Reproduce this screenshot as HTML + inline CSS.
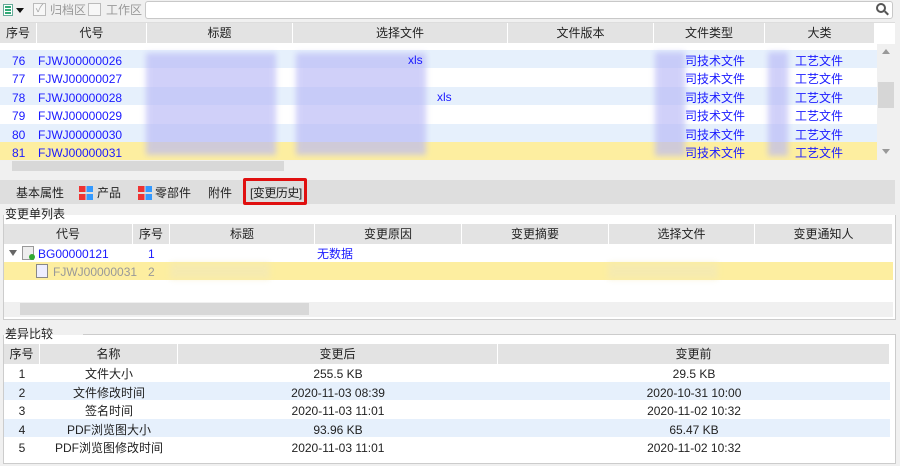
<!DOCTYPE html>
<html><head><meta charset="utf-8"><style>
*{margin:0;padding:0;box-sizing:border-box}
body{width:900px;height:466px;background:#f0f0f0;font-family:"Liberation Sans","Noto Sans CJK SC",sans-serif;font-size:12px;line-height:14px;color:#222;position:relative;overflow:hidden}
.a{position:absolute}
.c{position:absolute;text-align:center;white-space:nowrap;overflow:hidden}
.hd{position:absolute;background:#e3e3e3;border-right:1px solid #fff;text-align:center;line-height:20px;color:#222}
.blue{color:#1a1aff}
.blur{position:absolute;background:#b8b8f6;filter:blur(3px);opacity:.65}
.row{position:absolute;left:0}
</style></head><body>
<!-- toolbar -->
<div class="a" style="left:3px;top:4px;width:10px;height:12px;border:1px solid #6a9;background:#fff"></div>
<div class="a" style="left:5px;top:6px;width:6px;height:2px;background:#3a7;box-shadow:0 3px 0 #3a7,0 6px 0 #3a7"></div>
<div class="a" style="left:16px;top:8px;border-left:4px solid transparent;border-right:4px solid transparent;border-top:5px solid #111"></div>
<div class="a" style="left:33px;top:3px;width:13px;height:13px;border:1px solid #bbb;background:#f7f7f7;color:#aaa;font-size:11px;line-height:11px;text-align:center">✓</div>
<div class="a" style="left:50px;top:3px;color:#999;font-size:12px">归档区</div>
<div class="a" style="left:88px;top:3px;width:13px;height:13px;border:1px solid #bbb;background:#f7f7f7"></div>
<div class="a" style="left:106px;top:3px;color:#999;font-size:12px">工作区</div>
<div class="a" style="left:145px;top:1px;width:748px;height:18px;background:#fff;border:1px solid #c8c8c8;border-radius:3px"></div>
<div class="a" style="left:876px;top:3px;width:10px;height:10px;border:2px solid #555;border-radius:50%"></div>
<div class="a" style="left:884px;top:12px;width:5px;height:2px;background:#555;transform:rotate(45deg)"></div>

<!-- top grid -->
<div class="a" style="left:0;top:22px;width:895px;height:150px;background:#fff;border-top:1px solid #ddd"></div>
<div class="hd" style="left:0;top:23px;width:37px">序号</div>
<div class="hd" style="left:37px;top:23px;width:110px">代号</div>
<div class="hd" style="left:147px;top:23px;width:146px">标题</div>
<div class="hd" style="left:293px;top:23px;width:215px">选择文件</div>
<div class="hd" style="left:508px;top:23px;width:146px">文件版本</div>
<div class="hd" style="left:654px;top:23px;width:111px">文件类型</div>
<div class="hd" style="left:765px;top:23px;width:110px">大类</div>
<div class="hd" style="left:875px;top:23px;width:20px"></div>
<div class="row" style="top:50px;width:877px;height:18px;background:#e6f0fc"></div>
<div class="row" style="top:87px;width:877px;height:18px;background:#e6f0fc"></div>
<div class="row" style="top:124px;width:877px;height:18px;background:#e6f0fc"></div>
<div class="row" style="top:142px;width:877px;height:18px;background:#fdeea0"></div>
<div class="a blue" style="left:12px;top:52px;line-height:18.4px">76<br>77<br>78<br>79<br>80<br>81</div>
<div class="a blue" style="left:38px;top:52px;line-height:18.4px">FJWJ00000026<br>FJWJ00000027<br>FJWJ00000028<br>FJWJ00000029<br>FJWJ00000030<br>FJWJ00000031</div>
<div class="blur" style="left:146px;top:53px;width:130px;height:102px"></div>
<div class="blur" style="left:296px;top:53px;width:130px;height:102px"></div>
<div class="a blue" style="left:408px;top:53px">xls</div>
<div class="a blue" style="left:437px;top:90px">xls</div>
<div class="blur" style="left:655px;top:52px;width:30px;height:104px"></div>
<div class="blur" style="left:768px;top:52px;width:20px;height:104px"></div>
<div class="a blue" style="left:685px;top:52px;line-height:18.4px">司技术文件<br>司技术文件<br>司技术文件<br>司技术文件<br>司技术文件<br>司技术文件</div>
<div class="a blue" style="left:795px;top:52px;line-height:18.4px">工艺文件<br>工艺文件<br>工艺文件<br>工艺文件<br>工艺文件<br>工艺文件</div>
<div class="a blue" style="left:876px;top:52px;line-height:18.4px;font-size:10px">✕<br>✕<br>✕<br>✕<br>✕<br>✕</div>
<div class="a" style="left:877px;top:44px;width:18px;height:116px;background:#f0f0f0"></div>
<div class="a" style="left:878px;top:82px;width:16px;height:26px;background:#d6d6d6"></div>
<div class="a" style="left:882px;top:49px;border-left:4px solid transparent;border-right:4px solid transparent;border-bottom:5px solid #999"></div>
<div class="a" style="left:882px;top:149px;border-left:4px solid transparent;border-right:4px solid transparent;border-top:5px solid #999"></div>
<div class="a" style="left:0;top:160px;width:895px;height:12px;background:#f0f0f0"></div>
<div class="a" style="left:12px;top:161px;width:272px;height:10px;background:#d8d8d8"></div>

<!-- tabs -->
<div class="a" style="left:0;top:180px;width:895px;height:24px;background:#dedede"></div>
<div class="a" style="left:16px;top:186px">基本属性</div>
<div class="a" style="left:79px;top:186px;width:14px;height:14px;background:linear-gradient(90deg,#e33 0 45%,transparent 45% 55%,#39f 55%)"></div>
<div class="a" style="left:79px;top:192px;width:14px;height:2px;background:#dedede"></div>
<div class="a" style="left:97px;top:186px">产品</div>
<div class="a" style="left:138px;top:186px;width:14px;height:14px;background:linear-gradient(90deg,#e33 0 45%,transparent 45% 55%,#39f 55%)"></div>
<div class="a" style="left:138px;top:192px;width:14px;height:2px;background:#dedede"></div>
<div class="a" style="left:155px;top:186px">零部件</div>
<div class="a" style="left:208px;top:186px">附件</div>
<div class="a" style="left:243px;top:178px;width:64px;height:27px;border:3px solid #e01010;border-radius:2px"></div>
<div class="a" style="left:250px;top:186px;letter-spacing:-0.5px">[变更历史]</div>

<!-- change list -->
<div class="a" style="left:3px;top:214px;width:893px;height:106px;border:1px solid #ccc;background:#fff"></div>
<div class="a" style="left:3px;top:205px;background:#f0f0f0;width:895px;height:10px"></div>
<div class="a" style="left:5px;top:207px">变更单列表</div>
<div class="hd" style="left:4px;top:224px;width:129px">代号</div>
<div class="hd" style="left:133px;top:224px;width:37px">序号</div>
<div class="hd" style="left:170px;top:224px;width:145px">标题</div>
<div class="hd" style="left:315px;top:224px;width:147px">变更原因</div>
<div class="hd" style="left:462px;top:224px;width:147px">变更摘要</div>
<div class="hd" style="left:609px;top:224px;width:146px">选择文件</div>
<div class="hd" style="left:755px;top:224px;width:138px">变更通知人</div>
<div class="a" style="left:9px;top:250px;border-left:4px solid transparent;border-right:4px solid transparent;border-top:6px solid #666"></div>
<div class="a" style="left:22px;top:246px;width:12px;height:14px;border:1px solid #999;background:#eee"></div>
<div class="a" style="left:29px;top:254px;width:6px;height:6px;background:#3a3;border-radius:50%"></div>
<div class="a blue" style="left:38px;top:247px">BG00000121</div>
<div class="a blue" style="left:148px;top:247px">1</div>
<div class="a blue" style="left:317px;top:247px">无数据</div>
<div class="a" style="left:4px;top:262px;width:889px;height:18px;background:#fdeea0"></div>
<div class="a" style="left:36px;top:264px;width:12px;height:14px;border:1px solid #888;background:#eef"></div>
<div class="a" style="left:53px;top:265px;color:#999">FJWJ00000031</div>
<div class="a" style="left:148px;top:265px;color:#999">2</div>
<div class="blur" style="left:170px;top:263px;width:100px;height:16px;background:#f2e9b8"></div>
<div class="blur" style="left:608px;top:263px;width:110px;height:16px;background:#f2e9b8"></div>
<div class="a" style="left:4px;top:302px;width:889px;height:15px;background:#f0f0f0"></div>
<div class="a" style="left:20px;top:303px;width:289px;height:12px;background:#d8d8d8"></div>

<!-- diff -->
<div class="a" style="left:3px;top:334px;width:893px;height:130px;border:1px solid #ccc;background:#fff"></div>
<div class="a" style="left:3px;top:325px;background:#f0f0f0;width:80px;height:10px"></div>
<div class="a" style="left:5px;top:327px">差异比较</div>
<div class="hd" style="left:4px;top:344px;width:36px">序号</div>
<div class="hd" style="left:40px;top:344px;width:138px">名称</div>
<div class="hd" style="left:178px;top:344px;width:320px">变更后</div>
<div class="hd" style="left:498px;top:344px;width:392px">变更前</div>
<div class="a" style="left:4px;top:382px;width:886px;height:18px;background:#e6f0fc"></div>
<div class="a" style="left:4px;top:419px;width:886px;height:18px;background:#e6f0fc"></div>
<div class="c" style="left:4px;top:365px;width:36px;line-height:18.5px">1<br>2<br>3<br>4<br>5</div>
<div class="c" style="left:40px;top:365px;width:138px;line-height:18.5px">文件大小<br>文件修改时间<br>签名时间<br>PDF浏览图大小<br>PDF浏览图修改时间</div>
<div class="c" style="left:178px;top:365px;width:320px;line-height:18.5px">255.5 KB<br>2020-11-03 08:39<br>2020-11-03 11:01<br>93.96 KB<br>2020-11-03 11:01</div>
<div class="c" style="left:498px;top:365px;width:392px;line-height:18.5px">29.5 KB<br>2020-10-31 10:00<br>2020-11-02 10:32<br>65.47 KB<br>2020-11-02 10:32</div>
</body></html>
